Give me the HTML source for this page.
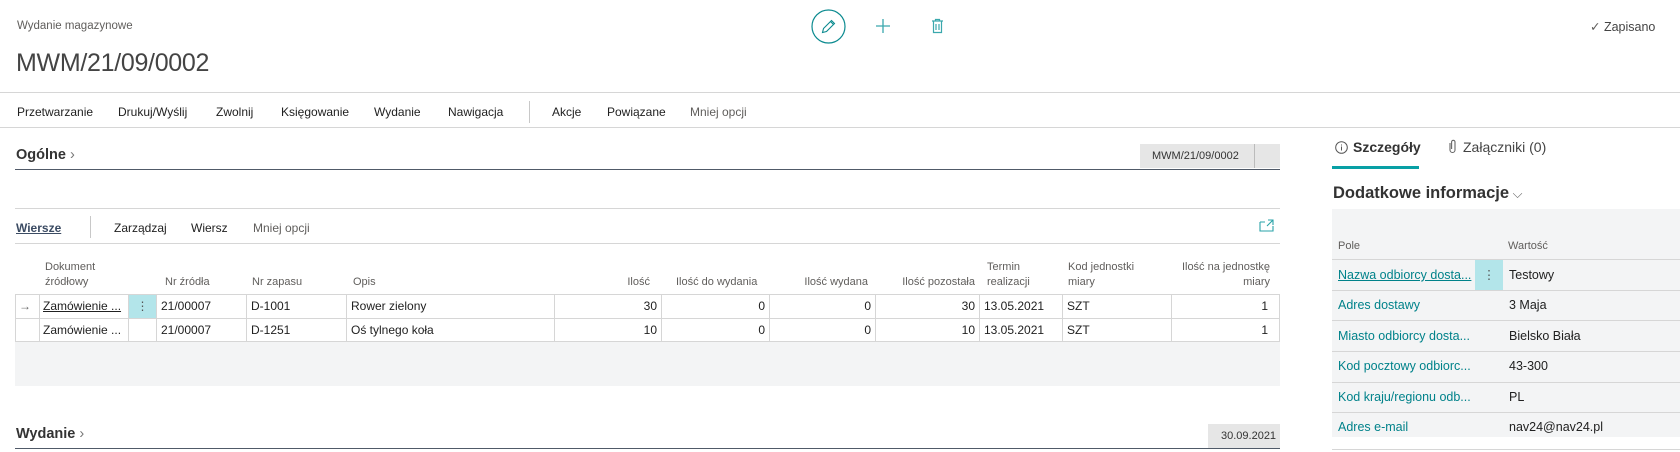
<!DOCTYPE html>
<html><head><meta charset="utf-8"><style>
*{margin:0;padding:0;box-sizing:border-box}
body{width:1680px;height:452px;overflow:hidden;background:#fff;font-family:"Liberation Sans",sans-serif;color:#212121;position:relative;font-size:12.5px}
.a{position:absolute;white-space:nowrap}
.hl{position:absolute;height:1px;background:#d6d6d6}
.t{line-height:16px;font-size:12px}
.g{color:#605e5c}
.teal{color:#00828a}
.cell{position:absolute;border-right:1px solid #d6d6d6;height:23px;line-height:22px;padding:0 4px;overflow:hidden;white-space:nowrap;font-size:12px}
.r{text-align:right}
.hdr{position:absolute;color:#605e5c;font-size:11px;line-height:15px}
</style></head><body>

<div class="a g" style="left:17px;top:20px;font-size:11.5px">Wydanie magazynowe</div>
<div class="a" style="left:16px;top:49px;font-size:25px;color:#444;letter-spacing:-0.3px">MWM/21/09/0002</div>

<svg class="a" style="left:811px;top:9px" width="35" height="35" viewBox="0 0 35 35"><circle cx="17.5" cy="17.5" r="16.5" fill="none" stroke="#0a8a8f" stroke-width="1.2"/><path d="M11.5 23.5l1-4 8-8 3 3-8 8z M19.5 12.5l3 3" fill="none" stroke="#0a8a8f" stroke-width="1.1"/></svg>
<svg class="a" style="left:875px;top:18px" width="16" height="16"><path d="M8 1v14M1 8h14" stroke="#3aa8ad" stroke-width="1.3"/></svg>
<svg class="a" style="left:931px;top:18px" width="13" height="16"><path d="M1 3h11M4.5 3V1.5h4V3M2.5 3.5v11h8v-11M5 6v6M8 6v6" fill="none" stroke="#3aa8ad" stroke-width="1.2"/></svg>
<div class="a g" style="left:1590px;top:19px;font-size:12.5px">✓ <span style="color:#444">Zapisano</span></div>

<div class="hl" style="left:0;top:92px;width:1680px"></div>
<div class="a t" style="top:104px;left:17px">Przetwarzanie</div>
<div class="a t" style="top:104px;left:118px">Drukuj/Wyślij</div>
<div class="a t" style="top:104px;left:216px">Zwolnij</div>
<div class="a t" style="top:104px;left:281px">Księgowanie</div>
<div class="a t" style="top:104px;left:374px">Wydanie</div>
<div class="a t" style="top:104px;left:448px">Nawigacja</div>
<div class="a" style="top:101px;left:529px;width:1px;height:22px;background:#c8c8c8"></div>
<div class="a t" style="top:104px;left:552px">Akcje</div>
<div class="a t" style="top:104px;left:607px">Powiązane</div>
<div class="a t g" style="top:104px;left:690px">Mniej opcji</div>
<div class="hl" style="left:0;top:127px;width:1680px"></div>

<div class="a" style="left:16px;top:147px;font-size:14.5px;font-weight:bold;color:#333">Ogólne<span style="font-weight:normal;color:#777"> ›</span></div>
<div class="a" style="left:1140px;top:144px;width:140px;height:24px;background:#e6e6e6"></div>
<div class="a" style="left:1254px;top:144px;width:1px;height:24px;background:#bbb"></div>
<div class="a" style="left:1152px;top:150px;font-size:11px;color:#333">MWM/21/09/0002</div>
<div class="a" style="left:15px;top:169px;width:1265px;height:1px;background:#505a68"></div>

<div class="hl" style="left:15px;top:208px;width:1265px"></div>
<div class="a" style="left:16px;top:221px;font-weight:bold;color:#3b4b63;text-decoration:underline;font-size:12px">Wiersze</div>
<div class="a" style="left:90px;top:216px;width:1px;height:22px;background:#c8c8c8"></div>
<div class="a t" style="left:114px;top:220px">Zarządzaj</div>
<div class="a t" style="left:191px;top:220px">Wiersz</div>
<div class="a t g" style="left:253px;top:220px">Mniej opcji</div>
<svg class="a" style="left:1259px;top:219px" width="15" height="13"><path d="M1 3v9h13V7M9 1h5v5M14 1L8 7M1 3h5" fill="none" stroke="#2aa3a8" stroke-width="1.1"/></svg>
<div class="hl" style="left:15px;top:243px;width:1265px"></div>

<div class="hdr" style="left:45px;top:260px">Dokument<br>źródłowy</div>
<div class="hdr" style="left:165px;top:275px">Nr źródła</div>
<div class="hdr" style="left:252px;top:275px">Nr zapasu</div>
<div class="hdr" style="left:353px;top:275px">Opis</div>
<div class="hdr" style="left:600px;top:275px;width:50px;text-align:right">Ilość</div>
<div class="hdr" style="left:676px;top:275px">Ilość do wydania</div>
<div class="hdr" style="left:800px;top:275px;width:68px;text-align:right">Ilość wydana</div>
<div class="hdr" style="left:880px;top:275px;width:95px;text-align:right">Ilość pozostała</div>
<div class="hdr" style="left:987px;top:260px">Termin<br>realizacji</div>
<div class="hdr" style="left:1068px;top:260px">Kod jednostki<br>miary</div>
<div class="hdr" style="left:1170px;top:260px;width:100px;text-align:right">Ilość na jednostkę<br>miary</div>

<div class="a" style="left:15px;top:294px;width:1265px;height:48px;border:1px solid #d6d6d6"></div>
<div class="hl" style="left:15px;top:318px;width:1265px"></div>
<div class="a" style="left:15px;top:342px;width:1265px;height:44px;background:#f3f4f5"></div>

<div class="cell" style="left:15px;top:295px;width:25px;color:#666">→</div>
<div class="cell" style="left:40px;top:295px;width:89px;text-decoration:underline;padding:0 3px">Zamówienie ...</div>
<div class="cell" style="left:129px;top:295px;width:28px;background:#b3e5ea;text-align:center;color:#555">⋮</div>
<div class="cell" style="left:157px;top:295px;width:90px">21/00007</div>
<div class="cell" style="left:247px;top:295px;width:100px">D-1001</div>
<div class="cell" style="left:347px;top:295px;width:208px">Rower zielony</div>
<div class="cell r" style="left:555px;top:295px;width:107px">30</div>
<div class="cell r" style="left:662px;top:295px;width:108px">0</div>
<div class="cell r" style="left:770px;top:295px;width:106px">0</div>
<div class="cell r" style="left:876px;top:295px;width:104px">30</div>
<div class="cell" style="left:980px;top:295px;width:83px">13.05.2021</div>
<div class="cell" style="left:1063px;top:295px;width:109px">SZT</div>
<div class="cell r" style="left:1172px;top:295px;width:108px;border-right:0;padding-right:12px">1</div>

<div class="cell" style="left:15px;top:319px;width:25px"></div>
<div class="cell" style="left:40px;top:319px;width:89px;padding:0 3px">Zamówienie ...</div>
<div class="cell" style="left:129px;top:319px;width:28px"></div>
<div class="cell" style="left:157px;top:319px;width:90px">21/00007</div>
<div class="cell" style="left:247px;top:319px;width:100px">D-1251</div>
<div class="cell" style="left:347px;top:319px;width:208px">Oś tylnego koła</div>
<div class="cell r" style="left:555px;top:319px;width:107px">10</div>
<div class="cell r" style="left:662px;top:319px;width:108px">0</div>
<div class="cell r" style="left:770px;top:319px;width:106px">0</div>
<div class="cell r" style="left:876px;top:319px;width:104px">10</div>
<div class="cell" style="left:980px;top:319px;width:83px">13.05.2021</div>
<div class="cell" style="left:1063px;top:319px;width:109px">SZT</div>
<div class="cell r" style="left:1172px;top:319px;width:108px;border-right:0;padding-right:12px">1</div>

<div class="a" style="left:16px;top:426px;font-size:14.5px;font-weight:bold;color:#333">Wydanie<span style="font-weight:normal;color:#777"> ›</span></div>
<div class="a" style="left:1208px;top:424px;width:72px;height:24px;background:#e6e6e6"></div>
<div class="a" style="left:1221px;top:430px;font-size:11px;color:#333">30.09.2021</div>
<div class="a" style="left:15px;top:448px;width:1265px;height:1px;background:#505a68"></div>

<svg class="a" style="left:1335px;top:141px" width="13" height="13"><circle cx="6.5" cy="6.5" r="5.8" fill="none" stroke="#555" stroke-width="1"/><path d="M6.5 5.5v4M6.5 3.5v1" stroke="#555"/></svg>
<div class="a" style="left:1353px;top:139px;font-size:14px;font-weight:bold;color:#333">Szczegóły</div>
<div class="a" style="left:1332px;top:166px;width:87px;height:3px;background:#08a0a5"></div>
<svg class="a" style="left:1448px;top:139px" width="9" height="15"><path d="M2 4v7a2.5 2.5 0 005 0V3a1.7 1.7 0 00-3.4 0v7" fill="none" stroke="#666" stroke-width="1.1"/></svg>
<div class="a" style="left:1463px;top:139px;font-size:14px;color:#444">Załączniki (0)</div>
<div class="a" style="left:1333px;top:184px;font-size:16.5px;font-weight:bold;color:#333">Dodatkowe informacje<span style="font-weight:normal;color:#666;font-size:13px"> ⌵</span></div>

<div class="a" style="left:1332px;top:209px;width:348px;height:228px;background:#f3f4f5"></div>
<div class="a g" style="left:1338px;top:240px;font-size:11px">Pole</div>
<div class="a g" style="left:1508px;top:240px;font-size:11px">Wartość</div>
<div class="hl" style="left:1332px;top:259px;width:348px"></div>
<div class="a" style="left:1475px;top:260px;width:28px;height:30px;background:#b3e5ea;text-align:center;line-height:30px;color:#555">⋮</div>
<div class="hl" style="left:1332px;top:290px;width:348px"></div>
<div class="hl" style="left:1332px;top:320px;width:348px"></div>
<div class="hl" style="left:1332px;top:351px;width:348px"></div>
<div class="hl" style="left:1332px;top:382px;width:348px"></div>
<div class="hl" style="left:1332px;top:412px;width:348px"></div>
<div class="hl" style="left:1332px;top:449px;width:348px"></div>
<div class="a teal" style="left:1338px;top:268px;text-decoration:underline">Nazwa odbiorcy dosta...</div>
<div class="a teal" style="left:1338px;top:298px">Adres dostawy</div>
<div class="a teal" style="left:1338px;top:329px">Miasto odbiorcy dosta...</div>
<div class="a teal" style="left:1338px;top:359px">Kod pocztowy odbiorc...</div>
<div class="a teal" style="left:1338px;top:390px">Kod kraju/regionu odb...</div>
<div class="a teal" style="left:1338px;top:420px">Adres e-mail</div>
<div class="a" style="left:1509px;top:268px">Testowy</div>
<div class="a" style="left:1509px;top:298px">3 Maja</div>
<div class="a" style="left:1509px;top:329px">Bielsko Biała</div>
<div class="a" style="left:1509px;top:359px">43-300</div>
<div class="a" style="left:1509px;top:390px">PL</div>
<div class="a" style="left:1509px;top:420px">nav24@nav24.pl</div>
</body></html>
